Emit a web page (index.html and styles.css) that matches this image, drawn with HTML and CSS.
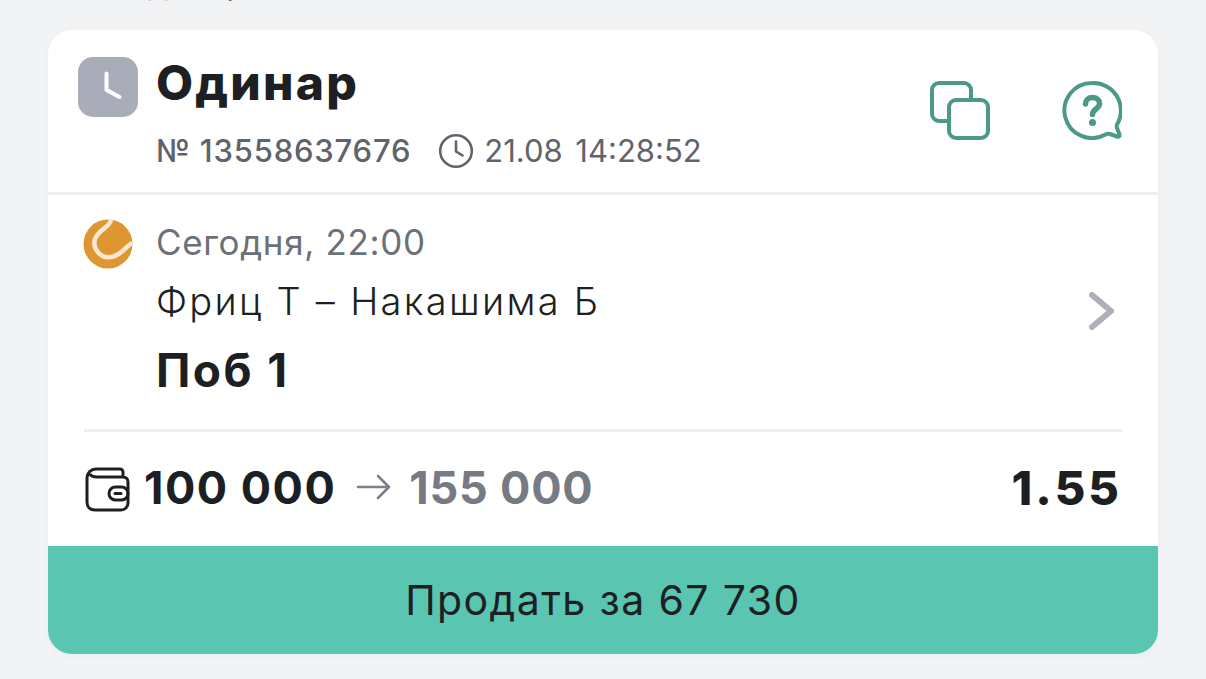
FILE: index.html
```html
<!DOCTYPE html>
<html lang="ru">
<head>
<meta charset="utf-8">
<title>Одинар</title>
<link rel="stylesheet" href="styles.css">
</head>
<body>
<div class="clipped-heading">Исходная,</div>
<main class="card">
  <header class="head">
    <div class="status">
      <svg viewBox="0 0 60 60" width="60" height="60"><path d="M28.500 16.500v16.500l13 7" fill="none" stroke="#fff" stroke-width="4" stroke-linecap="round" stroke-linejoin="round"/></svg>
    </div>
    <div class="head-main">
      <h1 class="title">Одинар</h1>
      <div class="meta">
        <span class="num">№ 13558637676</span>
        <svg class="meta-clock" viewBox="0 0 36 36" width="36" height="36"><circle cx="18" cy="18" r="15.800" fill="none" stroke="#5f636b" stroke-width="2.600"/><path d="M18 8.500v10l6.500 4" fill="none" stroke="#5f636b" stroke-width="2.600" stroke-linecap="round" stroke-linejoin="round"/></svg>
        <span class="time">21.08 14:28:52</span>
      </div>
    </div>
    <div class="actions">
      <svg viewBox="0 0 60 60" width="60" height="60" fill="none" stroke="#4b9a87" stroke-width="4"><path d="M19 41H9a7 7 0 0 1-7-7V10a7 7 0 0 1 7-7h25a7 7 0 0 1 7 7v10"/><rect x="19" y="20" width="39" height="38" rx="7"/></svg>
      <svg viewBox="0 0 60 60" width="60" height="60" fill="none" stroke="#4b9a87" stroke-width="4" stroke-linejoin="round"><path d="M30 3a27.500 27.500 0 1 0 13 51.700c2-1 3-1.500 5-.700l7 2.500c2 .7 3-.5 2.400-2.200l-2.400-6.300c-.6-1.500-.4-2.500.2-3.800A27.500 27.500 0 0 0 30 3z"/><path d="M23.500 24c0-4 3-6.500 7-6.500s7 2.500 7 6c0 5.500-7 5.500-7 11" stroke-width="5.500" stroke-linecap="round"/><circle cx="30.500" cy="42.500" r="3.500" fill="#4b9a87" stroke="none"/></svg>
    </div>
  </header>
  <section class="event">
    <div class="event-row">
      <svg class="ball" viewBox="0 0 50 50" width="50" height="50"><circle cx="25" cy="25" r="24.500" fill="#df9630"/><path d="M28 1C26 9 16 10 12 20C9 30 18 40 28 38C38 37 42 28 49 24" fill="none" stroke="#fbe9cf" stroke-width="4.500"/></svg>
      <div class="event-info">
        <div class="when">Сегодня, 22:00</div>
        <div class="teams">Фриц Т – Накашима Б</div>
        <div class="pick">Поб 1</div>
      </div>
      <svg class="chev" viewBox="0 0 26 38" width="26" height="38"><path d="M3 3l19 16L3 35" fill="none" stroke="#adb0ba" stroke-width="6" stroke-linecap="round" stroke-linejoin="round"/></svg>
    </div>
  </section>
  <section class="totals">
    <svg class="wallet" viewBox="0 0 46 46" width="46" height="46" fill="none" stroke="#1d1f23" stroke-width="3"><path d="M38 11V6a3 3 0 0 0-3-3H11C6 3 2 7 2 12v24c0 5 3 8 8 8h26c4 0 7-3 7-7V16c0-3-2-5-5-5H12c-3 0-6-1-7-3"/><rect x="24" y="21" width="19" height="13" rx="6.500"/><path d="M30 27.500h6" stroke-linecap="round"/></svg>
    <span class="stake">100 000</span>
    <svg class="arrow" viewBox="0 0 36 28" width="36" height="28" fill="none" stroke="#7c7f87" stroke-width="2.600" stroke-linecap="round" stroke-linejoin="round"><path d="M2 14h31M22 3l11 11-11 11"/></svg>
    <span class="win">155 000</span>
    <span class="odds">1.55</span>
  </section>
  <button class="sell">Продать за 67 730</button>
</main>
</body>
</html>
```
FILE: styles.css
```css
* { box-sizing: border-box; }
html, body { margin: 0; height: 679px; overflow: hidden; }
body {
  background: #f2f3f5;
  font-family: "Inter", "Noto Sans", sans-serif;
  color: #1d1f23;
  padding: 0 48px;
  display: flex;
  flex-direction: column;
}
.clipped-heading {
  height: 30px;
  margin-top: -32px;
  margin-bottom: 32px;
  padding-left: 17px;
  font-size: 34px;
  line-height: 30px;
  color: #5f636b;
}
.card {
  width: 1110px;
  height: 624px;
  background: #fff;
  border-radius: 24px;
  overflow: hidden;
  display: flex;
  flex-direction: column;
  box-shadow: 0 2px 10px rgba(0,0,0,.03);
}
.head {
  height: 165px;
  flex: none;
  display: flex;
  padding: 27px 36px 0 30px;
  border-bottom: 3px solid #eeeff1;
}
.status {
  width: 60px; height: 60px;
  border-radius: 15px;
  background: #a9adba;
  flex: none;
  display: flex;
}
.head-main { margin-left: 18px; flex: 1; }
.title {
  margin: 0;
  font-size: 48px;
  line-height: 52px;
  font-weight: 800;
  letter-spacing: 2.2px;
}
.meta {
  display: flex;
  align-items: center;
  margin-top: 24px;
  color: #5f636b;
  font-size: 31px;
  line-height: 36px;
}
.num { font-weight: 500; letter-spacing: 0.8px; }
.meta-clock { margin-left: 27px; margin-right: 10px; flex: none; }
.time { word-spacing: 4px; }
.actions {
  display: flex;
  gap: 72px;
  padding-top: 23px;
}
.event { padding: 0 36px; }
.event-row {
  height: 237px;
  border-bottom: 3px solid #eeeff1;
  display: flex;
  padding-top: 24px;
}
.ball { flex: none; margin-left: -1px; }
.event-info { margin-left: 23px; flex: 1; }
.when { font-size: 35px; line-height: 46px; color: #6c7078; letter-spacing: 0.65px; }
.teams { font-size: 38px; line-height: 46px; margin-top: 13px; font-weight: 300; letter-spacing: 2.3px; }
.pick { font-size: 46px; line-height: 50px; font-weight: 700; margin-top: 21px; letter-spacing: 2.4px; }
.chev { margin-top: 73px; margin-right: 7px; flex: none; }
.totals {
  flex: 1;
  display: flex;
  align-items: center;
  padding: 0 36px 4px 37px;
  font-size: 45px;
  font-weight: 700;
}
.wallet { flex: none; margin-right: 13px; margin-top: 4px; }
.stake { letter-spacing: 1.5px; }
.arrow { margin: 0 17px 0 20px; flex: none; }
.win { color: #777a83; letter-spacing: 0.8px; }
.odds { margin-left: auto; font-size: 47px; font-weight: 800; letter-spacing: 3px; }
.sell {
  height: 108px;
  flex: none;
  width: 100%;
  border: 0;
  padding: 0;
  background: #5ac5b1;
  color: #1d1f23;
  font-family: inherit;
  font-size: 41px;
  font-weight: 400;
  letter-spacing: 1.4px;
}
```
